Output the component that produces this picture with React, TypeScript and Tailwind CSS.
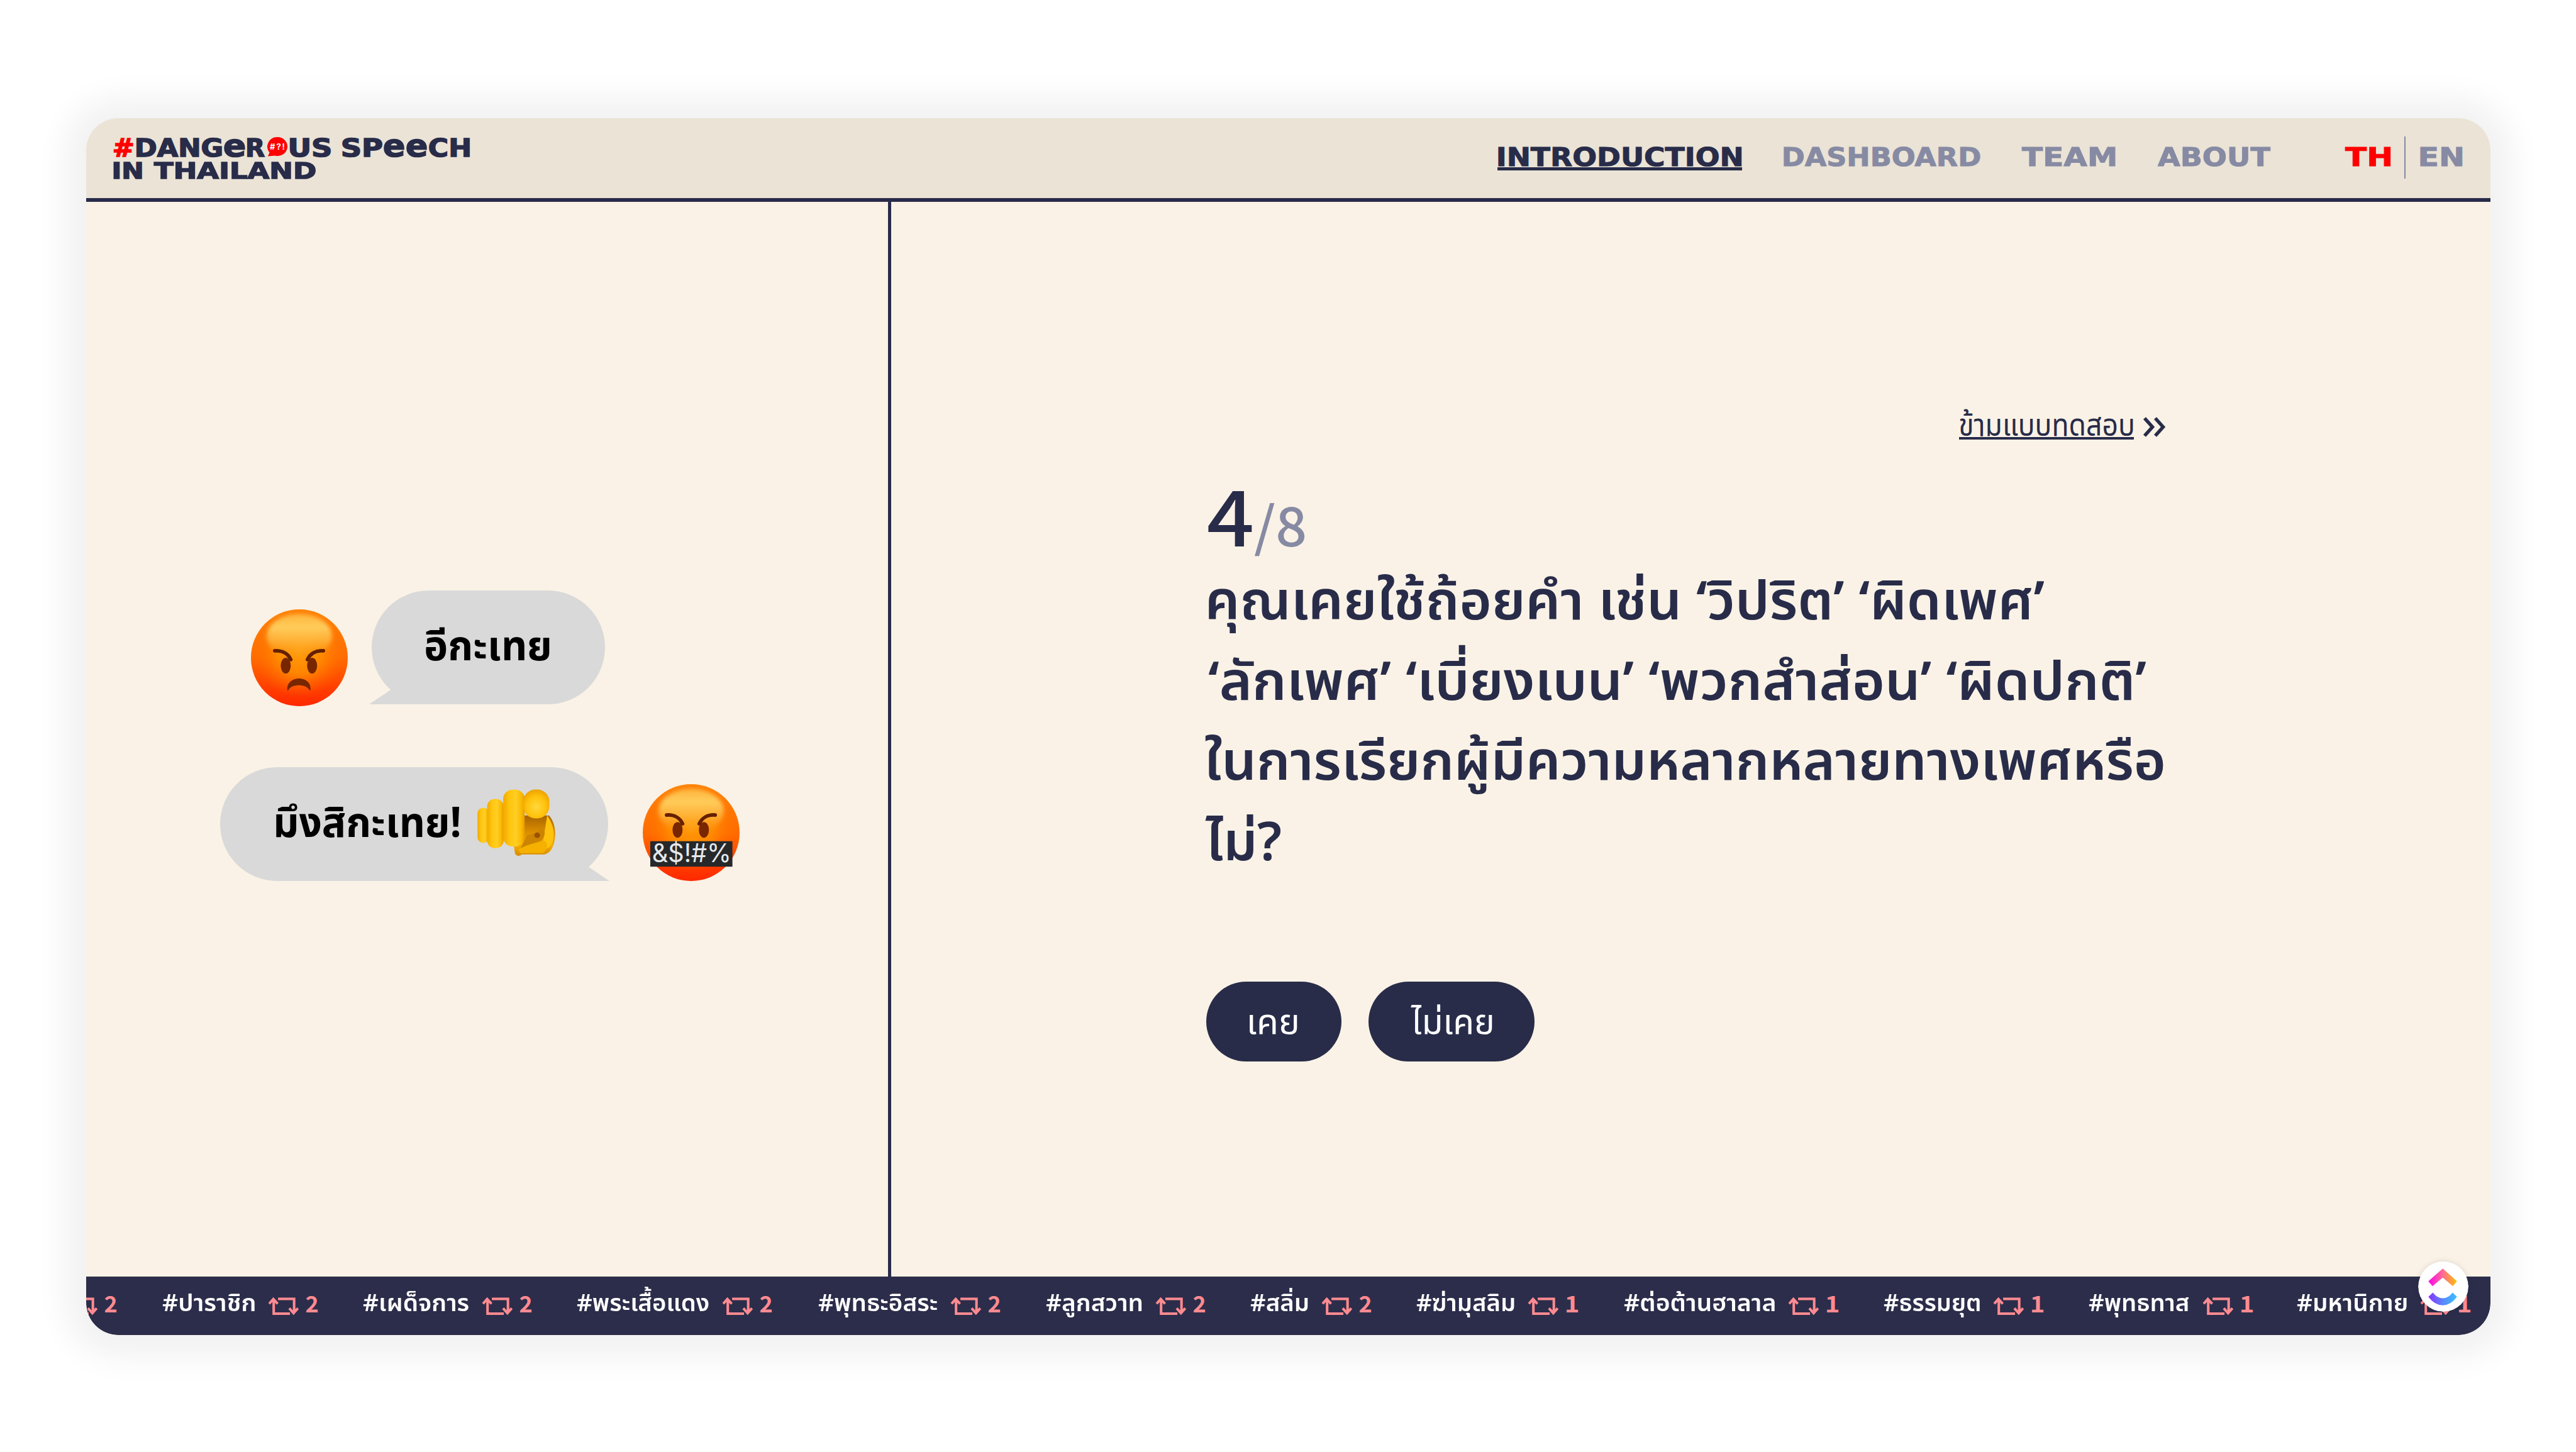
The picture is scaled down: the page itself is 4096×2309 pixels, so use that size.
import { useLayoutEffect, useRef, type ReactNode } from "react";

/** Text stretched horizontally so that its ink spans the whole width of its box. */
function Fit({ className, children }: { className: string; children: string }) {
  const box = useRef<HTMLSpanElement>(null);
  const ink = useRef<HTMLSpanElement>(null);
  useLayoutEffect(() => {
    if (!box.current || !ink.current) return;
    const style = getComputedStyle(ink.current);
    const context = document.createElement("canvas").getContext("2d");
    if (!context) return;
    context.font = `${style.fontWeight} ${style.fontSize} ${style.fontFamily}`;
    const m = context.measureText(children);
    const scale =
      box.current.offsetWidth / (m.actualBoundingBoxLeft + m.actualBoundingBoxRight);
    ink.current.style.transform = `translateX(${m.actualBoundingBoxLeft * scale}px) scaleX(${scale})`;
  }, [children]);
  return (
    <span ref={box} className={`block shrink-0 whitespace-nowrap ${className}`}>
      <span ref={ink} className="inline-block origin-top-left">
        {children}
      </span>
    </span>
  );
}

function Logo() {
  return (
    <div className="pt-[27px] text-[#282c49] [-webkit-text-stroke:1.5px_currentColor]">
      <div className="flex items-baseline text-[39px] leading-[36px]">
        <Fit className="w-[31px] text-[#ff0000]">#</Fit>
        <Fit className="ml-[5px] w-[136px]">DANG</Fit>
        <Fit className="ml-[4px] w-[32px] text-[49px]">e</Fit>
        <Fit className="ml-[4px] w-[28px]">R</Fit>
        <svg viewBox="0 0 32 31" className="ml-[4px] h-[31px] w-[32px] shrink-0">
          <path d="M16 0a15.6 15 0 1 1-4 29.4L1 30.6l2.6-6.2A15.6 15 0 0 1 16 0z" fill="#ff0000" />
          <text x="4" y="20" textLength="24" fontSize="13" fontWeight="700" fill="#fff" stroke="none" fontFamily="Inter, sans-serif">
            #?!
          </text>
        </svg>
        <Fit className="ml-[4px] w-[65px]">US</Fit>
        <Fit className="ml-[18px] w-[63px]">SP</Fit>
        <Fit className="ml-[4px] w-[67px] text-[49px]">ee</Fit>
        <Fit className="ml-[4px] w-[65px]">CH</Fit>
      </div>
      <div className="flex items-baseline text-[36px] leading-[36px]">
        <Fit className="w-[44px]">IN</Fit>
        <Fit className="ml-[20px] w-[256px]">THAILAND</Fit>
      </div>
    </div>
  );
}

function Header() {
  return (
    <header className="flex h-[133px] shrink-0 justify-between border-b-[6px] border-[#282c49] bg-[#eae3d6] pr-[45px] pl-[44px] font-['DejaVu_Sans',sans-serif] font-bold">
      <Logo />
      <nav className="flex items-center pb-[3px] text-[41px] leading-[50px] text-[#878aa3] [-webkit-text-stroke:1px_currentColor]">
        <a className="relative mr-[67px] text-[#282c49]">
          <Fit className="w-[387px]">INTRODUCTION</Fit>
          <span className="absolute -inset-x-[1px] top-[41px] h-[5px] bg-[#282c49]" />
        </a>
        <Fit className="mr-[67px] w-[312px]">DASHBOARD</Fit>
        <Fit className="mr-[67px] w-[149px]">TEAM</Fit>
        <Fit className="mr-[119px] w-[179px]">ABOUT</Fit>
        <Fit className="w-[72px] text-[#ff0000]">TH</Fit>
        <span className="mr-[23px] ml-[22px] h-[67px] w-[2px] bg-[#878aa3]" />
        <Fit className="w-[67px]">EN</Fit>
      </nav>
    </header>
  );
}

function AngryFace({ id, lift = 0, children }: { id: string; lift?: number; children: ReactNode }) {
  return (
    <svg viewBox="0 0 540 540" className="size-[154px] shrink-0 overflow-visible">
      <defs>
        <linearGradient id={`${id}-base`} x1="0" y1="0" x2="0" y2="1">
          <stop offset="0" stopColor="#ff8408" />
          <stop offset="0.5" stopColor="#ff6c00" />
          <stop offset="0.8" stopColor="#ff4000" />
          <stop offset="1" stopColor="#ff2800" />
        </linearGradient>
        <radialGradient id={`${id}-core`} cx="0.5" cy="0.42" r="0.5">
          <stop offset="0" stopColor="#ff9c0c" />
          <stop offset="0.5" stopColor="#ff8d00" stopOpacity="0.85" />
          <stop offset="1" stopColor="#ff6a00" stopOpacity="0" />
        </radialGradient>
        <linearGradient id={`${id}-shine`} x1="0" y1="0" x2="0" y2="1">
          <stop offset="0" stopColor="#ffc24a" stopOpacity="0.8" />
          <stop offset="0.3" stopColor="#ffcd5c" />
          <stop offset="0.6" stopColor="#ffc04a" stopOpacity="0.7" />
          <stop offset="1" stopColor="#ffa020" stopOpacity="0" />
        </linearGradient>
        <filter id={`${id}-soft`} x="-20%" y="-20%" width="140%" height="140%">
          <feGaussianBlur stdDeviation="12" />
        </filter>
      </defs>
      <circle cx="270" cy="270" r="270" fill={`url(#${id}-base)`} />
      <circle cx="270" cy="270" r="262" fill={`url(#${id}-core)`} />
      <ellipse cx="270" cy="150" rx="182" ry="125" fill={`url(#${id}-shine)`} filter={`url(#${id}-soft)`} />
      <g transform={`translate(0 ${-lift})`}>
        <path
          d="M133 231C175 228 207 247 222 280M404 231C362 228 330 247 315 280"
          fill="none"
          stroke="#662000"
          strokeWidth="20"
          strokeLinecap="round"
        />
        <ellipse cx="194" cy="314" rx="28" ry="44" fill="#782600" />
        <ellipse cx="341" cy="314" rx="28" ry="44" fill="#782600" />
      </g>
      {children}
    </svg>
  );
}

function PointingHand() {
  return (
    <svg viewBox="45 85 445 380" className="h-[108px] w-[127px] shrink-0">
      <defs>
        <linearGradient id="finger" x1="0" y1="0" x2="1" y2="0">
          <stop offset="0" stopColor="#f2a900" />
          <stop offset="0.3" stopColor="#ffc60f" />
          <stop offset="0.6" stopColor="#ffce25" />
          <stop offset="0.85" stopColor="#fbb900" />
          <stop offset="1" stopColor="#e49a00" />
        </linearGradient>
        <radialGradient id="tip" cx="0.5" cy="0.6" r="0.6">
          <stop offset="0" stopColor="#ffd83c" />
          <stop offset="0.6" stopColor="#ffc20c" />
          <stop offset="1" stopColor="#eda300" />
        </radialGradient>
        <linearGradient id="palm" x1="0" y1="0" x2="0" y2="1">
          <stop offset="0" stopColor="#a86400" />
          <stop offset="0.4" stopColor="#d98c00" />
          <stop offset="0.75" stopColor="#f3ac00" />
          <stop offset="1" stopColor="#d68a00" />
        </linearGradient>
      </defs>
      <path
        d="M300 235H452C476 262 490 305 486 352C481 410 462 446 424 454H300C288 466 266 464 261 446L255 400z"
        fill="url(#palm)"
      />
      <path d="M442 235C470 275 484 320 478 362C472 405 448 424 412 425L425 340z" fill="#ffc20d" />
      <path d="M330 345C360 345 395 325 420 298C434 330 430 358 405 378C370 392 320 400 290 425z" fill="#cd8400" />
      <ellipse cx="386" cy="346" rx="16" ry="15" fill="#9a5300" />
      <path d="M280 425C340 395 385 392 412 380C455 370 446 428 418 446H290z" fill="#f6b100" />
      <rect x="52" y="192" width="66" height="197" rx="32" fill="url(#finger)" />
      <rect x="106" y="143" width="92" height="275" rx="42" fill="url(#finger)" />
      <rect x="196" y="91" width="120" height="318" rx="52" fill="url(#finger)" />
      <rect x="308" y="90" width="146" height="162" rx="68" fill="url(#tip)" />
    </svg>
  );
}

function Insults() {
  return (
    <section className="flex w-[1280px] shrink-0 flex-col gap-[100px] border-r-[5px] border-[#282c49] pt-[618px] font-bold text-black">
      <div className="flex h-[181px] items-end gap-[38px] pl-[262px]">
        <div className="-mb-[3px]">
          <AngryFace id="pouting">
            <path
              d="M203 449C197 365 340 365 332 449C334 454 328 454 325 449C308 415 226 415 210 449C207 454 201 454 203 449z"
              fill="#782600"
            />
          </AngryFace>
        </div>
        <div className="relative flex h-[181px] w-[371px] items-center rounded-full bg-[#d9d9d9] pl-[86px] text-[66px] leading-[90px]">
          <svg viewBox="0 0 90 40" className="absolute bottom-0 -left-[4px] h-[40px] w-[90px]">
            <path d="M0 40L34 17L60 0L90 40z" fill="#d9d9d9" />
          </svg>
          <Fit className="relative w-[197px]">อีกะเทย</Fit>
        </div>
      </div>
      <div className="flex h-[181px] items-end gap-[55px] pl-[213px]">
        <div className="relative flex h-[181px] w-[617px] items-center rounded-full bg-[#d9d9d9] pl-[89px] text-[66px] leading-[90px]">
          <svg viewBox="0 0 90 40" className="absolute -right-[2px] bottom-0 h-[40px] w-[90px]">
            <path d="M90 40L56 17L30 0L0 40z" fill="#d9d9d9" />
          </svg>
          <Fit className="relative mr-[26px] w-[292px]">มึงสิกะเทย!</Fit>
          <div className="relative -mt-[6px]">
            <PointingHand />
          </div>
        </div>
        <AngryFace id="cursing" lift={59}>
          <rect x="42" y="318" width="458" height="142" fill="#26282a" />
          <text
            x="52"
            y="436"
            textLength="442"
            lengthAdjust="spacingAndGlyphs"
            fontSize="142"
            fontFamily="Inter, sans-serif"
            fontWeight="400"
            fill="#e6e8ea"
          >
            &amp;$!#%
          </text>
        </AngryFace>
      </div>
    </section>
  );
}

function Question() {
  return (
    <section className="flex grow flex-col pt-[318px] pr-[513px] pl-[501px]">
      <a className="flex h-[76px] items-center justify-end pr-[3px] text-[50px] leading-[76px]">
        <span className="relative top-[1px]">
          <Fit className="w-[276px]">ข้ามแบบทดสอบ</Fit>
          <span className="absolute -inset-x-[1px] top-[55px] h-[4px] bg-[#282c49]" />
        </span>
        <svg viewBox="0 0 37 32" className="mt-[3px] ml-[15px] h-[32px] w-[37px]">
          <path
            d="M3 2L15.500 16L3 30M20 2L32.500 16L20 30"
            fill="none"
            stroke="#282c49"
            strokeWidth="5.500"
          />
        </svg>
      </a>
      <div className="mt-[35px] flex h-[130px] items-baseline pl-[3px] font-['Noto_Sans_CJK_SC',sans-serif] leading-[130px] font-medium">
        <Fit className="w-[70px] text-[123px]">4</Fit>
        <Fit className="ml-[4px] w-[80px] text-[86px] text-[#878aa3]">/8</Fit>
      </div>
      <h1 className="mt-[16px] text-[85px] leading-[127.500px] font-semibold">
        <Fit className="ml-[4px] w-[1329px]">คุณเคยใช้ถ้อยคำ เช่น ‘วิปริต’ ‘ผิดเพศ’</Fit>
        <Fit className="ml-[4px] w-[1491px]">‘ลักเพศ’ ‘เบี่ยงเบน’ ‘พวกสำส่อน’ ‘ผิดปกติ’</Fit>
        <Fit className="-ml-[2px] w-[1524px]">ในการเรียกผู้มีความหลากหลายทางเพศหรือ</Fit>
        <Fit className="-ml-[2px] w-[121px]">ไม่?</Fit>
      </h1>
      <div className="mt-[155px] flex gap-[43px] text-[55px] leading-[80px] text-white">
        <button className="flex h-[127px] w-[215px] items-center justify-center rounded-full bg-[#282c49] pt-[6px]">
          <Fit className="w-[76px]">เคย</Fit>
        </button>
        <button className="flex h-[127px] w-[264px] items-center justify-center rounded-full bg-[#282c49] pt-[6px]">
          <Fit className="w-[130px]">ไม่เคย</Fit>
        </button>
      </div>
    </section>
  );
}

function Shares({ count }: { count: string }) {
  return (
    <span className="flex shrink-0 items-center text-[#ff8b91]">
      <svg viewBox="8 228 174 104" className="h-[30px] w-[50px]">
        <path
          d="M40 246V322H130M15 267L38 241L62 267M64 240H153V314M126 292L150 319L174 292"
          fill="none"
          stroke="currentColor"
          strokeWidth="14"
        />
      </svg>
      <Fit className="-mt-[11px] ml-[11px] w-[19px] font-['Noto_Sans_CJK_SC',sans-serif] text-[36px] font-bold">{count}</Fit>
    </span>
  );
}

const hashtags = [
  { text: "#ปาราชิก", count: "2", item: "w-[319px]", label: "w-[147px]" },
  { text: "#เผด็จการ", count: "2", item: "w-[340px]", label: "w-[168px]" },
  { text: "#พระเสื้อแดง", count: "2", item: "w-[384px]", label: "w-[210px]" },
  { text: "#พุทธะอิสระ", count: "2", item: "w-[362px]", label: "w-[189px]" },
  { text: "#ลูกสวาท", count: "2", item: "w-[325px]", label: "w-[153px]" },
  { text: "#สลิ่ม", count: "2", item: "w-[264px]", label: "w-[92px]" },
  { text: "#ฆ่ามุสลิม", count: "1", item: "w-[330px]", label: "w-[156px]" },
  { text: "#ต่อต้านฮาลาล", count: "1", item: "w-[413px]", label: "w-[240px]" },
  { text: "#ธรรมยุต", count: "1", item: "w-[326px]", label: "w-[153px]" },
  { text: "#พุทธทาส", count: "1", item: "w-[331px]", label: "w-[160px]" },
  { text: "#มหานิกาย", count: "1", item: "w-[331px]", label: "w-[175px]" },
];

function Ticker() {
  return (
    <footer className="flex h-[93px] shrink-0 items-center overflow-hidden rounded-b-[51px] bg-[#2c2d4a] text-[38px] leading-[60px] font-semibold text-white">
      <div className="-ml-[31px] w-[152px] shrink-0">
        <Shares count="2" />
      </div>
      {hashtags.map(({ text, count, item, label }) => (
        <div key={text} className={`flex shrink-0 items-center gap-[21px] ${item}`}>
          <Fit className={`-mt-[5px] ${label}`}>{text}</Fit>
          <Shares count={count} />
        </div>
      ))}
    </footer>
  );
}

function ClickUpBadge() {
  return (
    <svg viewBox="1218 33 280 280" className="absolute right-[35px] bottom-[37px] size-[80px] rounded-full shadow-[0_0_10px_rgba(0,0,0,0.12)]">
      <defs>
        <linearGradient id="roof" x1="0" x2="1">
          <stop offset="0" stopColor="#ff02f0" />
          <stop offset="0.5" stopColor="#ff6c92" />
          <stop offset="1" stopColor="#ffc000" />
        </linearGradient>
        <linearGradient id="smile" x1="0" x2="1">
          <stop offset="0" stopColor="#8930fd" />
          <stop offset="0.5" stopColor="#5b86ff" />
          <stop offset="1" stopColor="#36c2ff" />
        </linearGradient>
      </defs>
      <circle cx="1358" cy="173" r="140" fill="#fff" />
      <path d="M1355 72L1434 143L1411 170L1355 123L1298 170L1275 143z" fill="url(#roof)" />
      <path d="M1275 230L1300 206Q1325 238 1355 238Q1385 238 1410 206L1434 230Q1400 277 1355 277Q1310 277 1275 230z" fill="url(#smile)" />
    </svg>
  );
}

export default function App() {
  return (
    <div className="flex h-[2309px] w-[4096px] justify-center overflow-hidden bg-white pt-[188px] font-['Noto_Sans_Thai','Noto_Sans',sans-serif] text-[#282c49]">
      <div className="relative h-[1935px] w-[3823px] rounded-[51px] shadow-[0_2px_50px_34px_rgba(0,0,0,0.055)]">
        <div className="flex h-full flex-col overflow-hidden rounded-[51px] bg-[#faf2e6]">
          <Header />
          <main className="flex h-[1709px] shrink-0">
            <Insults />
            <Question />
          </main>
          <Ticker />
        </div>
        <ClickUpBadge />
      </div>
    </div>
  );
}
